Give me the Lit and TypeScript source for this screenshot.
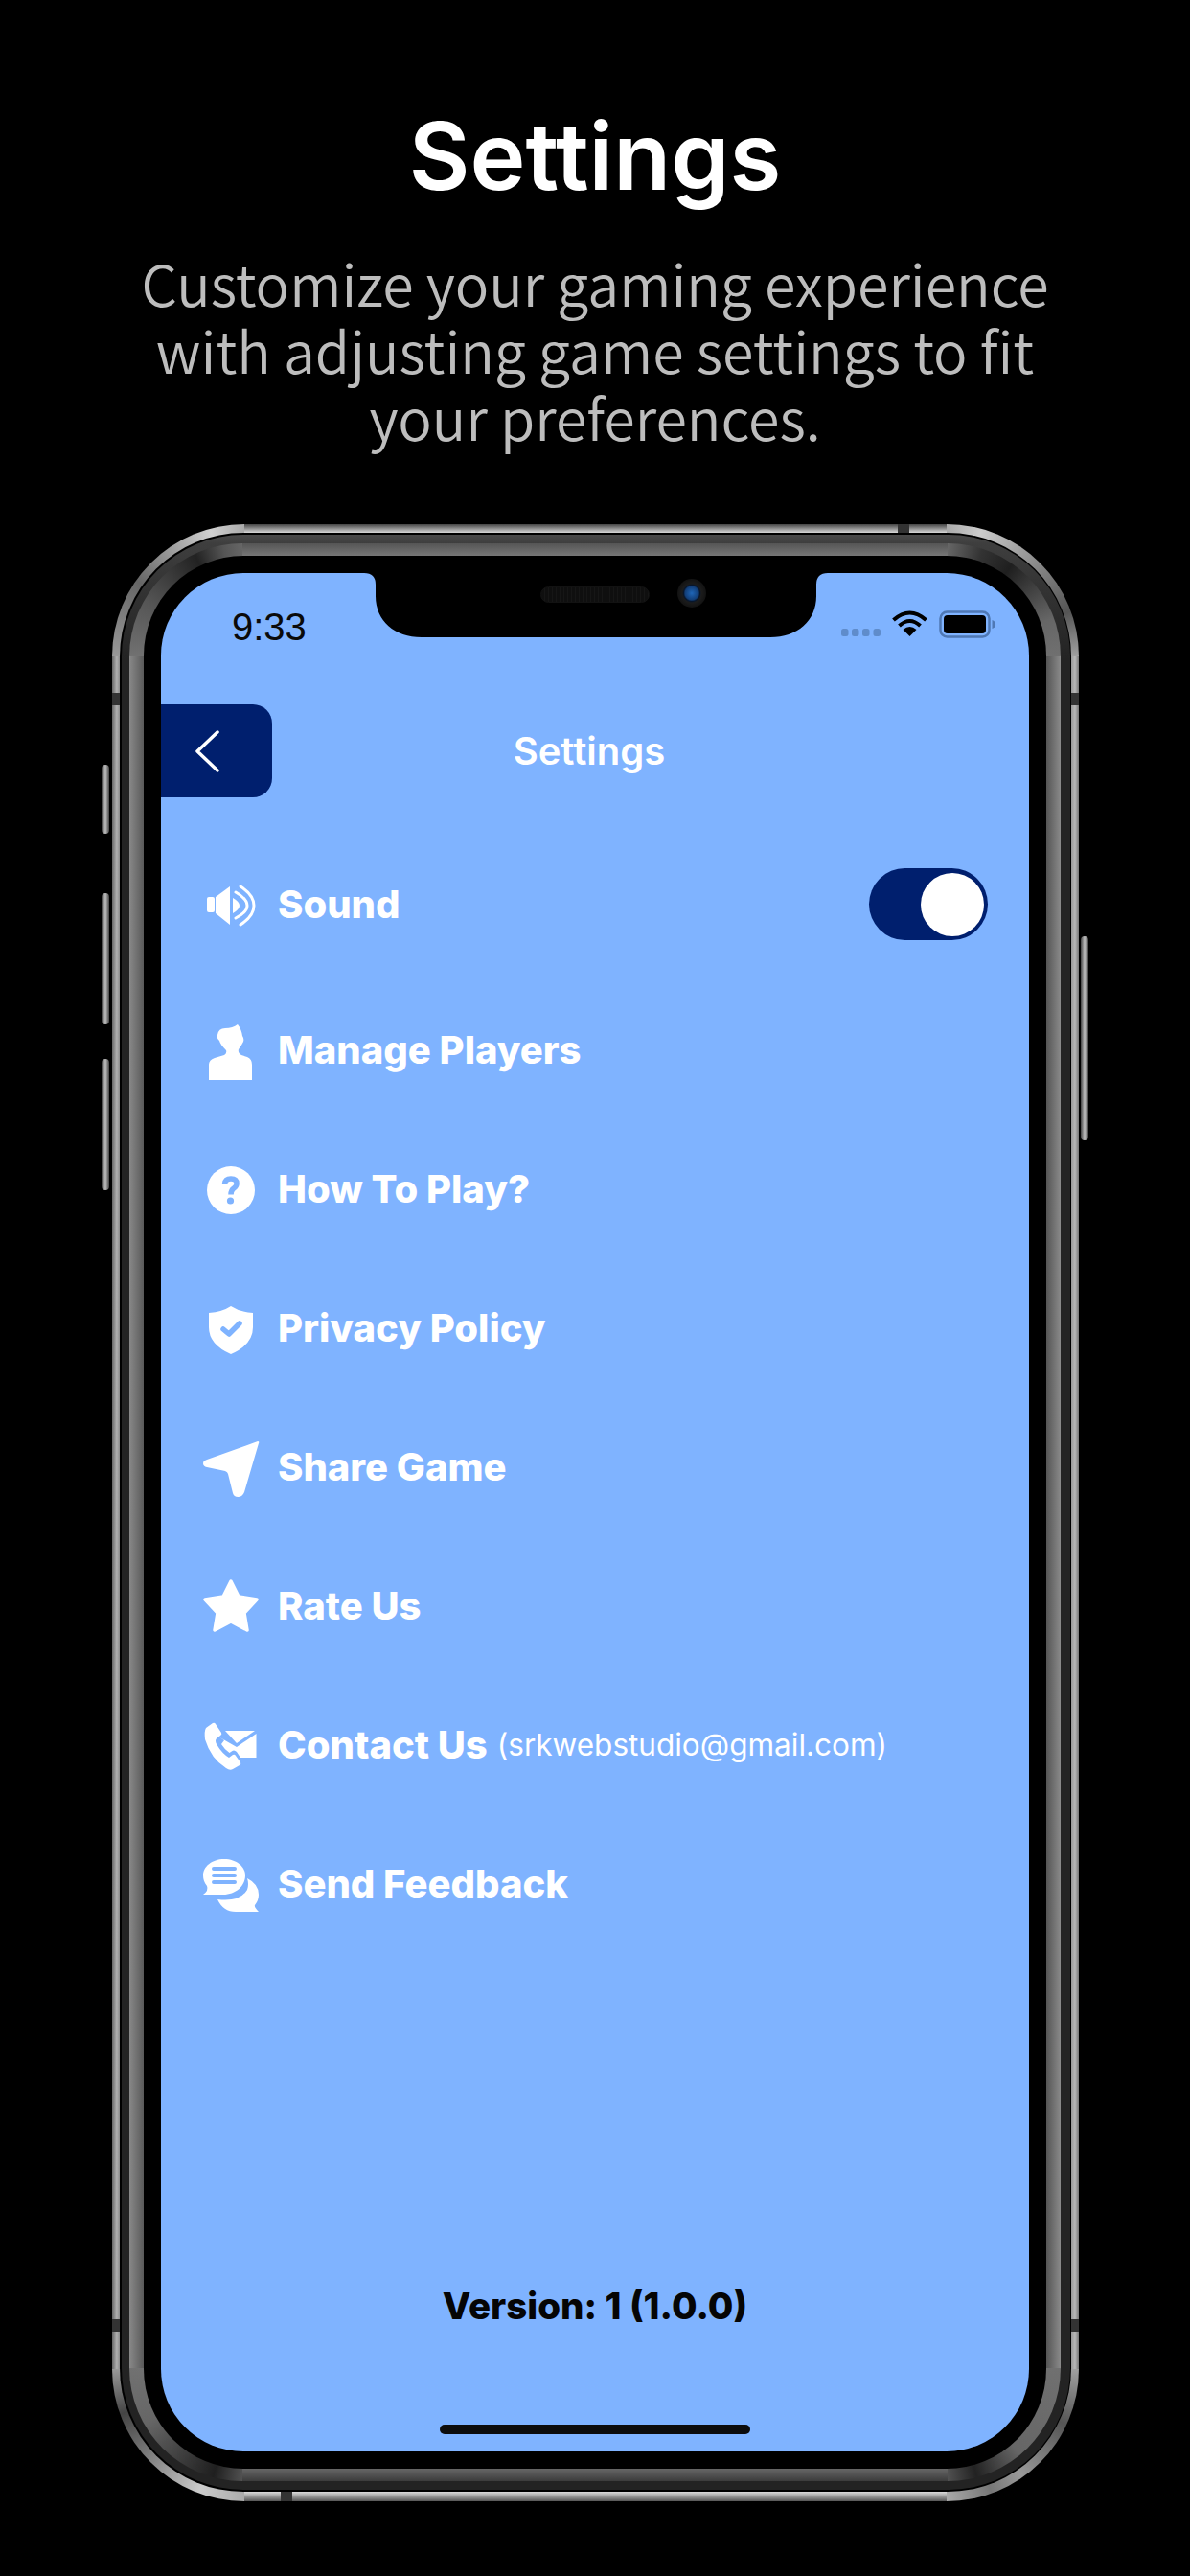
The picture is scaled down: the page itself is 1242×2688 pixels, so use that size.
import { LitElement, html, css, svg, unsafeCSS } from "lit";
import { customElement } from "lit/decorators.js";

const BLUE = "#7fb3ff";

const rowIcon = (cy: number, body: unknown) =>
  html`<svg class="ico" viewBox="206 ${cy - 35} 70 70" width="70" height="70">${body}</svg>`;

const ROWS: { label: string; note?: string; cy: number; icon: unknown }[] = [
  {
    label: "Manage Players",
    cy: 1096,
    icon: svg`<path fill="#fff" d="M218 1127V1111Q218 1106 224 1104L234 1101Q237 1099 236 1096Q230 1090 229 1086Q226 1084 227 1080Q228 1073 235 1073Q243 1073 248 1069Q252 1074 253 1081Q255 1084 254 1087Q252 1091 249 1095Q248 1099 252 1101L258 1103Q263 1105 263 1111V1127Z"/>`,
  },
  {
    label: "How To Play?",
    cy: 1242,
    icon: svg`<circle cx="241" cy="1243" r="25" fill="#fff"/><path fill="none" stroke="${BLUE}" stroke-width="5.5" d="M234.5 1236.5Q235 1231 241 1231Q247 1231 247 1236Q247 1239 244 1241Q241 1243 241 1247.5"/><circle cx="240.5" cy="1254" r="3.6" fill="${BLUE}"/>`,
  },
  {
    label: "Privacy Policy",
    cy: 1386,
    icon: svg`<path fill="#fff" d="M241 1363Q250 1369 264 1370V1385Q264 1403 241 1413Q218 1403 218 1385V1370Q232 1369 241 1363Z"/><path fill="none" stroke="${BLUE}" stroke-width="5.5" stroke-linecap="round" stroke-linejoin="round" d="M233 1387L239 1392L250 1381"/>`,
  },
  {
    label: "Share Game",
    cy: 1531,
    icon: svg`<path fill="#fff" d="M269 1504Q271 1504 270 1506L255 1557Q253 1562 248.500 1562Q244 1562 243 1558L238 1538Q237.500 1536 235 1535L216 1531Q212 1530 212 1527Q212 1524 216 1523Z"/>`,
  },
  {
    label: "Rate Us",
    cy: 1677,
    icon: svg`<path fill="#fff" stroke="#fff" stroke-width="3.500" stroke-linejoin="round" d="M241 1651L249 1667L268 1670L255 1684L258 1702L241 1693L224 1702L227 1684L214 1670L233 1667Z"/>`,
  },
  {
    label: "Contact Us",
    note: "(srkwebstudio@gmail.com)",
    cy: 1821,
    icon: svg`<g fill="#fff"><path d="M215 1803L222 1798Q224 1797 225 1799L231 1808Q232 1810 230 1811L226 1814Q224 1816 226 1820Q232 1830 239 1834L243 1831Q245 1830 246 1832L251 1839Q252 1841 250 1842L243 1846Q240 1848 236 1845Q220 1835 214 1815Q213 1806 215 1803Z"/><path d="M235 1806H266L247 1819Z"/><path d="M229.500 1813L247 1823L267.500 1809V1834H251L247 1828Q244 1825 241 1828L239.500 1829Q234 1825 231 1820L234 1816Z"/></g>`,
  },
  {
    label: "Send Feedback",
    cy: 1966,
    icon: svg`<g fill="#fff"><path d="M234 1940C247 1940 256 1948 256 1957C256 1968 246 1977 233 1977H212Q218 1973 216 1968C213 1964 212 1961 212 1957C212 1948 221 1940 234 1940Z"/><path d="M258 1960Q270 1966 270 1977Q270 1983 266 1988Q265 1990 270 1995H246Q233 1995 227 1982Q250 1985 258 1972Q260 1966 258 1960Z"/></g><path stroke="${BLUE}" stroke-width="4" stroke-linecap="round" fill="none" d="M223 1950H245M223 1957H245M223 1964H245"/>`,
  },
];

@customElement("app-root")
export class AppRoot extends LitElement {
  static styles = css`
    :host {
      display: block;
      width: 1242px;
      height: 2688px;
      background: #000;
      overflow: hidden;
      font-family: "Inter", "Noto Sans", sans-serif;
    }
    .head {
      display: flex;
      flex-direction: column;
      align-items: center;
      padding-top: 103px;
    }
    h1 {
      margin: 0;
      font-size: 98px;
      line-height: 120px;
      font-weight: 600;
      color: #fff;
    }
    .sub {
      margin: 37px 0 0;
      font-family: "Noto Sans CJK SC", "Noto Sans", sans-serif;
      font-weight: 350;
      font-size: 59px;
      line-height: 70px;
      color: #bdbdbd;
      text-align: center;
    }
    .phone {
      position: relative;
      box-sizing: border-box;
      width: 1009px;
      height: 2063px;
      padding: 9px 8px 10px 8px;
      border-radius: 138px;
      background-color: #000;
      background-repeat: no-repeat;
      background-image:
        conic-gradient(from 270deg at 100% 100%, #999, #666 35deg, #d0d0d0 75deg, #aaa 90deg, #000 0),
        conic-gradient(from 0deg at 0 100%, #aaa, #ccc 15deg, #888 45deg, #555 70deg, #a0a0a0 90deg, #000 0),
        conic-gradient(from 180deg at 100% 0, #aaa, #ccc 20deg, #777 50deg, #444 70deg, #999 90deg, #000 0),
        conic-gradient(from 90deg at 0 0, #a0a0a0, #555 25deg, #999 55deg, #777 70deg, #aaa 90deg, #000 0),
        linear-gradient(180deg, #444, #d8d8d8),
        linear-gradient(0deg, #555, #dcdcdc),
        linear-gradient(90deg, #666, #b0b0b0 60%, #8a8a8a),
        linear-gradient(90deg, #9a9a9a, #b8b8b8 50%, #777);
      background-size:
        138px 138px, 138px 138px, 138px 138px, 138px 138px,
        calc(100% - 276px) 9px, calc(100% - 276px) 10px,
        8px calc(100% - 276px), 8px calc(100% - 276px);
      background-position:
        0 0, 100% 0, 0 100%, 100% 100%,
        50% 0, 50% 100%, 0 50%, 100% 50%;
    }
    .wrap { margin: 77px 0 0 117px; width: 1009px; }
    .gap {
      box-sizing: border-box;
      height: 100%;
      padding: 2px 1px 2px 2px;
      background: #000;
      border-radius: 129px;
    }
    .ring2 {
      box-sizing: border-box;
      height: 100%;
      padding: 9px 10px 9px 8px;
      border-radius: 127px;
      background: linear-gradient(180deg, #4a4a4a 0, #3e3e3e 9px, #232323 130px);
    }
    .ring3 {
      box-sizing: border-box;
      height: 100%;
      padding: 13px 15px;
      border-radius: 118px;
      background-color: #333;
      background-repeat: no-repeat;
      background-image:
        conic-gradient(from 270deg at 100% 100%, #717171, #555 30deg, #222 65deg, #555 80deg, #666 90deg, #000 0),
        conic-gradient(from 0deg at 0 100%, #666, #333 18deg, #1f1f1f 35deg, #666 70deg, #707070 90deg, #000 0),
        conic-gradient(from 180deg at 100% 0, #515151, #1f1f1f 15deg, #666 60deg, #717171 90deg, #000 0),
        conic-gradient(from 90deg at 0 0, #707070, #666 50deg, #222 75deg, #515151 90deg, #000 0),
        linear-gradient(180deg, #555, #777),
        linear-gradient(0deg, #3c3c3c, #666),
        linear-gradient(90deg, #888, #5a5a5a),
        linear-gradient(90deg, #555, #8a8a8a);
      background-size:
        118px 118px, 118px 118px, 118px 118px, 118px 118px,
        calc(100% - 236px) 13px, calc(100% - 236px) 13px,
        15px calc(100% - 236px), 15px calc(100% - 236px);
      background-position:
        0 0, 100% 0, 0 100%, 100% 100%,
        50% 0, 50% 100%, 0 50%, 100% 50%;
    }
    .bezel {
      box-sizing: border-box;
      height: 100%;
      padding: 18px;
      background: #000;
      border-radius: 104px;
    }
    .band {
      position: absolute;
      background: #333;
    }
    .band.v { width: 12px; height: 9px; }
    .band.h { width: 8px; height: 13px; }
    .band.at-top { left: 820px; top: 0; }
    .band.at-bottom { left: 176px; bottom: 0; height: 10px; }
    .band.l1 { left: 0; top: 176px; }
    .band.l2 { left: 0; top: 1873px; }
    .band.r1 { right: 0; top: 176px; }
    .band.r2 { right: 0; top: 1873px; }
    .btn {
      position: absolute;
      width: 8px;
      border-radius: 4px;
      background: linear-gradient(90deg, #444, #c0c0c0 50%, #444);
    }
    .btn.a { left: -11px; top: 251px; height: 72px; }
    .btn.b { left: -11px; top: 385px; height: 137px; }
    .btn.c { left: -11px; top: 558px; height: 137px; }
    .btn.d { right: -10px; top: 430px; height: 213px; }

    .screen {
      position: relative;
      box-sizing: border-box;
      width: 906px;
      height: 1960px;
      overflow: hidden;
      display: flex;
      flex-direction: column;
      background: ${unsafeCSS(BLUE)};
      border-radius: 86px;
    }
    .notch {
      position: absolute;
      left: 212px;
      top: 0;
    }
    .speaker {
      position: absolute;
      left: 396px;
      top: 14px;
      width: 114px;
      height: 17px;
      border-radius: 9px;
      background: repeating-linear-gradient(90deg, #0f0f0f 0 3px, #161616 3px 4px);
      border: 1px solid #121212;
      box-sizing: border-box;
    }
    .cam {
      position: absolute;
      left: 539px;
      top: 6px;
      width: 30px;
      height: 30px;
      border-radius: 50%;
      background: radial-gradient(circle at 50% 50%, #1f66b8 0, #123e78 7px, #07162c 8.500px, #1c1c1c 10px, #121212 15px);
    }
    .status {
      height: 137px;
      box-sizing: border-box;
      padding: 36px 34px 0 74px;
      display: flex;
      justify-content: space-between;
      align-items: flex-start;
      flex: none;
    }
    .time {
      font-family: "Liberation Sans", sans-serif;
      font-size: 40px;
      line-height: 40px;
      color: #0a0a0a;
    }
    .bar {
      display: flex;
      align-items: center;
      height: 97px;
      flex: none;
      padding-right: 128px;
    }
    .back {
      width: 116px;
      height: 97px;
      box-sizing: border-box;
      padding-right: 20px;
      display: flex;
      align-items: center;
      justify-content: center;
      background: #001f6e;
      border-radius: 0 20px 20px 0;
      flex: none;
    }
    .bar h2 {
      flex: 1;
      margin: 0;
      text-align: center;
      color: #fff;
      font-size: 40px;
      font-weight: 600;
    }
    .list {
      margin-top: 39px;
      display: flex;
      flex-direction: column;
    }
    .row {
      height: 145px;
      display: flex;
      align-items: center;
      gap: 14px;
      padding: 0 43px 0 38px;
      color: #fff;
      font-size: 40px;
      font-weight: 800;
    }
    .row.first { margin-bottom: 7px; }
    .ico { flex: none; overflow: visible; }
    .note {
      font-weight: 400;
      font-size: 31.500px;
      margin-left: -4px;
    }
    .grow { flex: 1; }
    .toggle {
      width: 124px;
      height: 75px;
      box-sizing: border-box;
      padding: 0 4px;
      display: flex;
      align-items: center;
      justify-content: flex-end;
      border-radius: 38px;
      background: #001f6e;
    }
    .knob {
      width: 66px;
      height: 66px;
      border-radius: 50%;
      background: #fff;
    }
    .version {
      margin-top: auto;
      text-align: center;
      font-size: 38.500px;
      font-weight: 800;
      line-height: 50px;
      color: #050505;
    }
    .home {
      align-self: center;
      margin: 99px 0 18px;
      width: 324px;
      height: 10px;
      border-radius: 5px;
      background: #0c0c0c;
      flex: none;
    }
  `;

  render() {
    return html`
      <div class="head">
        <h1>Settings</h1>
        <p class="sub">Customize your gaming experience<br />with adjusting game settings to fit<br />your preferences.</p>
      </div>
      <div class="wrap">
      <div class="phone">
        <div class="btn a"></div>
        <div class="btn b"></div>
        <div class="btn c"></div>
        <div class="btn d"></div>
        <div class="band v at-top"></div>
        <div class="band v at-bottom"></div>
        <div class="band h l1"></div>
        <div class="band h l2"></div>
        <div class="band h r1"></div>
        <div class="band h r2"></div>
        <div class="gap">
          <div class="ring2">
            <div class="ring3">
              <div class="bezel">
                <div class="screen">
                  <svg class="notch" width="484" height="67" viewBox="0 0 484 67">
                    <path fill="#000" d="M0 0H484Q472 0 472 12V24C472 50 452 67 424 67H60C32 67 12 50 12 24V12Q12 0 0 0Z"/>
                  </svg>
                  <div class="speaker"></div>
                  <div class="cam"></div>
                  <div class="status">
                    <span class="time">9:33</span>
                    <svg width="162" height="36" viewBox="879 636 162 36">
                      <g fill="#5f8ccb">
                        <rect x="879" y="658" width="7.500" height="8" rx="2.500"/>
                        <rect x="890" y="658" width="7.500" height="8" rx="2.500"/>
                        <rect x="901" y="658" width="7.500" height="8" rx="2.500"/>
                        <rect x="912.500" y="658" width="7.500" height="8" rx="2.500"/>
                      </g>
                      <g fill="none" stroke="#000" stroke-width="4">
                        <path d="M933.500 649Q950.500 634 967.500 649"/>
                        <path d="M939.500 655Q950.500 645 961.500 655"/>
                      </g>
                      <path fill="#000" d="M950.500 666L943.500 659Q950.500 653 957.500 659Z"/>
                      <rect x="982.500" y="640.500" width="51" height="26" rx="7" fill="none" stroke="#4f78b4" stroke-width="2.500"/>
                      <rect x="986" y="644" width="44" height="19" rx="4" fill="#000"/>
                      <path fill="#4f78b4" d="M1036.500 649Q1040 650 1040 653.500Q1040 657 1036.500 658Z"/>
                    </svg>
                  </div>
                  <div class="bar">
                    <div class="back">
                      <svg width="30" height="48" viewBox="0 0 30 48">
                        <path d="M26 4L5 24L26 44" fill="none" stroke="#fff" stroke-width="3.500" stroke-linecap="round" stroke-linejoin="round"/>
                      </svg>
                    </div>
                    <h2>Settings</h2>
                  </div>
                  <div class="list">
                    <div class="row first">
                      ${rowIcon(944, svg`<g fill="#fff"><rect x="216" y="936" width="8" height="16" rx="2"/><path d="M225 936L240 925V965L225 953Z"/><path d="M243 937Q250 941 250 945Q250 949 243 953Z"/></g><g fill="none" stroke="#fff" stroke-width="3" stroke-linecap="round"><path d="M246 931Q258 938 258 945Q258 952 246 958"/><path d="M251 925Q265 934 265 945Q265 956 251 965"/></g>`)}
                      <span>Sound</span>
                      <span class="grow"></span>
                      <div class="toggle"><div class="knob"></div></div>
                    </div>
                    ${ROWS.map(
                      (r) => html`<div class="row">
                        ${rowIcon(r.cy, r.icon)}
                        <span>${r.label}</span>
                        ${r.note ? html`<span class="note">${r.note}</span>` : ""}
                      </div>`
                    )}
                  </div>
                  <div class="version">Version: 1 (1.0.0)</div>
                  <div class="home"></div>
                </div>
              </div>
            </div>
          </div>
        </div>
      </div>
      </div>
    `;
  }
}
